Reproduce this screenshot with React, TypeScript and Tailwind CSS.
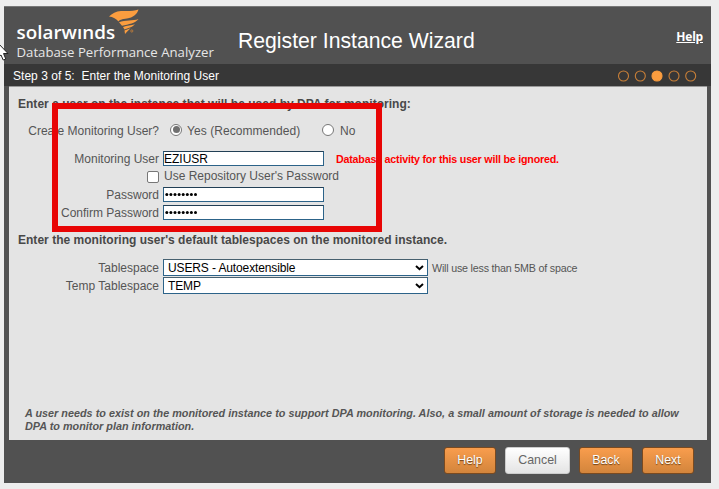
import React from "react";

const orange =
  "h-[27px] rounded-[3px] border border-[#7a4a20] bg-linear-to-b from-[#f99d4d] to-[#d3853c] text-[12.4px] leading-[25px] text-white [text-shadow:0_1px_1px_#6b3f14]";

function Label({ children }: { children: React.ReactNode }) {
  return <div className="w-[150px] shrink-0 text-right whitespace-nowrap">{children}</div>;
}

function Select({ value }: { value: string }) {
  return (
    <button className="ml-[4px] flex h-[17px] w-[265px] shrink-0 items-center justify-between border border-[#2c6389] border-t-[#47606f] bg-white pr-[3px] pl-[4px] text-left text-[12px] leading-[15px] tracking-[-0.12px] text-black">
      <span className="pt-px">{value}</span>
      <svg width="9" height="6" viewBox="0 0 9 6" fill="none" stroke="#000" strokeWidth="2">
        <path d="M1 1l3.5 3.2L8 1" />
      </svg>
    </button>
  );
}

function Field({ children }: { children: React.ReactNode }) {
  return (
    <div className="ml-[4px] flex h-[15px] w-[161px] shrink-0 items-center border border-[#2c6389] border-t-[#223f55] bg-white text-[12px] leading-[13px] text-black">
      {children}
    </div>
  );
}

function Dots() {
  return (
    <svg width="34" height="5" viewBox="0 0 34 5" fill="#000">
      {[0, 1, 2, 3, 4, 5, 6, 7].map((i) => (
        <circle key={i} cx={2.8 + i * 4.1} cy="2.5" r="1.5" />
      ))}
    </svg>
  );
}

export default function App() {
  return (
    <div className="relative h-[489px] w-[719px] overflow-hidden bg-[#ededed] pt-[6px] pl-[4px] font-['Liberation_Sans',Arial,sans-serif] text-[#555]">
      <div className="flex h-[477px] w-[707px] flex-col bg-[#515151]">
        <header className="flex h-[58px] shrink-0 border-t border-[#777]">
          <div className="w-[234px] pl-[12.5px] font-['Open_Sans',sans-serif] whitespace-nowrap text-white">
            <div className="flex h-[36px]">
              <div className="w-[100px] pt-[14px] text-[18.8px] leading-[22px] font-semibold tracking-[0.05px]">solarwınds</div>
              <svg className="-ml-[8px] mt-[2px] shrink-0" width="32" height="26" viewBox="0 0 32 26" fill="#fb9d3f">
                <path d="M0 7.5C3 4.5 7 2 12 2C18 2 24 2.5 29.5 0.5C28 5.5 24 8.5 18 9.5C13 10.3 10 10.8 9.5 12.5C7.5 9.8 4 8 0 7.5Z" />
                <path d="M10 13.2C16 10.8 24 12.2 29.5 10C26 14.5 20 15.2 13 16.7Z" />
                <path d="M14 18C18 16 22 16.5 26 15.2C23 18.5 19 19 15.5 20.5Z" />
                <path d="M15.5 21.5L21.5 19.2C19.5 21 18 23 16 25Z" />
                <circle cx="22.8" cy="22" r="1.1" fill="none" stroke="#d68535" strokeWidth=".7" />
              </svg>
            </div>
            <div className="text-[13.2px] leading-[18px] text-[#e6e6e6]">Database Performance Analyzer</div>
          </div>
          <h1 className="flex-1 pt-[21px] text-[21.2px] leading-[26px] whitespace-nowrap text-white">Register Instance Wizard</h1>
          <a className="mr-[8px] pt-[21px] font-['Open_Sans',sans-serif] text-[12px] leading-[17px] font-bold tracking-[-0.2px] text-white underline">Help</a>
        </header>
        <div className="flex h-[22px] shrink-0 items-center justify-between bg-[#373737] pt-px pr-[14px] pl-[9px] text-[12px] tracking-[0.03px] text-white">
          <span className="whitespace-pre">{"Step 3 of 5:  Enter the Monitoring User"}</span>
          <svg width="80" height="12" viewBox="0 0 80 12" fill="none" stroke="#c87f38" strokeWidth="1.1">
            <circle cx="6.5" cy="6" r="5" />
            <circle cx="23.3" cy="6" r="5" />
            <circle cx="40" cy="6" r="5" fill="#fb9d3f" stroke="#fb9d3f" />
            <circle cx="57" cy="6" r="5" />
            <circle cx="73.7" cy="6" r="5" />
          </svg>
        </div>
        <main className="mx-[5px] flex h-[354px] w-[698px] shrink-0 flex-col border-t border-[#999] bg-[#e4e4e4] text-[12px] leading-[16px]">
          <h2 className="mt-[9px] ml-[9px] font-bold tracking-[0.02px] text-[#484848]">Enter a user on the instance that will be used by DPA for monitoring:</h2>
          <div className="mt-[11px] flex h-[16px] items-center whitespace-nowrap">
            <Label>Create Monitoring User?</Label>
            <span className="mt-[-3px] ml-[11px] flex size-[12px] items-center justify-center rounded-full border border-[#777] bg-white">
              <span className="size-[7px] rounded-full bg-[#707070]" />
            </span>
            <span className="ml-[5px] w-[135px] tracking-[0.06px]">Yes (Recommended)</span>
            <span className="mt-[-3px] size-[12px] rounded-full border border-[#777] bg-white" />
            <span className="ml-[6px]">No</span>
          </div>
          <div className="mt-[12px] flex h-[15px] items-center">
            <Label>Monitoring User</Label>
            <Field><span className="pt-px">EZIUSR</span></Field>
            <span className="ml-[12px] text-[10.7px] font-bold tracking-[-0.21px] whitespace-nowrap text-[#ff0000]">Database activity for this user will be ignored.</span>
          </div>
          <div className="mt-[1px] flex h-[18px] items-center">
            <span className="mt-[1px] ml-[138px] size-[12px] rounded-[2px] border border-[#777] bg-white" />
            <span className="ml-[5px]">Use Repository User's Password</span>
          </div>
          <div className="mt-[2px] flex h-[15px] items-center">
            <Label>Password</Label>
            <Field><Dots /></Field>
          </div>
          <div className="mt-[3px] flex h-[15px] items-center">
            <Label>Confirm Password</Label>
            <Field><Dots /></Field>
          </div>
          <h2 className="mt-[12px] ml-[9px] font-bold tracking-[0.02px] text-[#484848]">Enter the monitoring user's default tablespaces on the monitored instance.</h2>
          <div className="mt-[11px] flex h-[17px] items-center">
            <Label>Tablespace</Label>
            <Select value="USERS - Autoextensible" />
            <span className="ml-[4px] text-[10.7px] tracking-[-0.2px] whitespace-nowrap">Will use less than 5MB of space</span>
          </div>
          <div className="mt-[1px] flex h-[17px] items-center">
            <Label>Temp Tablespace</Label>
            <Select value="TEMP" />
          </div>
          <p className="mt-auto mb-[8px] ml-[16px] text-[10.8px] leading-[12.5px] font-bold tracking-[0.02px] whitespace-nowrap italic">
            A user needs to exist on the monitored instance to support DPA monitoring. Also, a small amount of storage is needed to allow
            <br />
            DPA to monitor plan information.
          </p>
        </main>
        <footer className="flex justify-end pt-[7px] pr-[17px]">
          <button className={`${orange} w-[52px]`}>Help</button>
          <button className="ml-[9px] h-[27px] w-[65px] rounded-[3px] border border-[#ccc] bg-linear-to-b from-white to-[#e4e4e4] text-[12.4px] leading-[25px] text-[#666]">Cancel</button>
          <button className={`${orange} ml-[9px] w-[54px]`}>Back</button>
          <button className={`${orange} ml-[9px] w-[52px]`}>Next</button>
        </footer>
      </div>
      <div className="absolute top-[103px] left-[52px] h-[129px] w-[330px] border-[6px] border-[#e80505]" />
      <svg className="absolute top-[44px] left-[0px]" width="9" height="17" viewBox="0 0 9 17">
        <path d="M-3 -2L8 9.5H3.5L5.8 15L3.2 16L1 11L-3 14Z" fill="#fff" stroke="#222" strokeWidth="1" />
      </svg>
    </div>
  );
}
